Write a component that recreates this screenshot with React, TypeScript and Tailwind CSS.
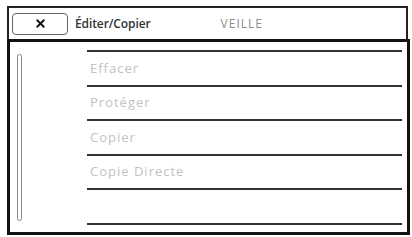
import { X } from 'lucide-react';

const ITEMS = ['Effacer', 'Protéger', 'Copier', 'Copie Directe', ''];

export default function App() {
    return (
        <div className="w-[412px] h-[237px] bg-white pl-[7px] pt-[6px]" style={{ fontFamily: '"Open Sans", "DejaVu Sans", sans-serif' }}>
            <div className="w-[401px] h-[33px] border-2 border-b-0 border-[#222] flex items-center">
                <div className="ml-[3px] w-[56px] h-[22px] rounded-[4px] border-[1.5px] border-[#666] flex items-center justify-center">
                    <X className="h-[13px] w-[13px] text-[#111]" strokeWidth={3.5} />
                </div>
                <span className="ml-[7px] text-[12px] font-semibold text-[#333] tracking-[-0.1px]">Éditer/Copier</span>
                <span className="ml-[70px] text-[12px] text-[#8c8c8c] tracking-[1px]">VEILLE</span>
            </div>
            <div className="w-[403px] h-[196px] border-[3px] border-[#111] flex">
                <div className="ml-[7px] mt-[12px] w-[5px] h-[167px] rounded-full border border-[#888]" />
                <div className="ml-[65px] mr-[5px] mt-[8px] flex-1">
                    <div className="border-t-2 border-[#333]">
                        {ITEMS.map((item, i) => (
                            <div key={i} className="h-[34.6px] border-b-2 border-[#333] flex items-center pl-[3px]">
                                <span className="text-[13px] text-[#c2c2c2] tracking-[1px]">{item}</span>
                            </div>
                        ))}
                    </div>
                </div>
            </div>
        </div>
    );
}
